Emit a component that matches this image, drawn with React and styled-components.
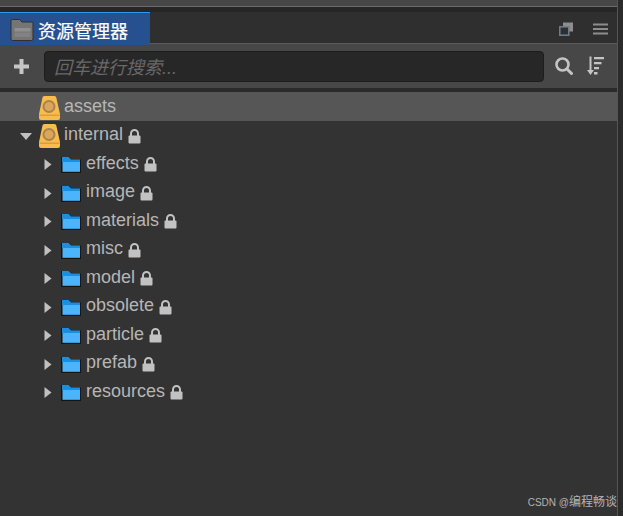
import React from 'react'
import styled, { createGlobalStyle } from 'styled-components'

const GlobalStyle = createGlobalStyle`
  html, body { margin: 0; padding: 0; background: #333333; }
  * { box-sizing: border-box; }
`

const Page = styled.div`
  position: relative;
  width: 623px;
  height: 516px;
  overflow: hidden;
  display: flex;
  background: #2b2b2b;
  font-family: "Liberation Sans", "Noto Sans CJK SC", sans-serif;
`

const Panel = styled.div`
  width: 618px;
  height: 100%;
  display: flex;
  flex-direction: column;
  border-right: 1px solid #555555;
`

const TopStrip = styled.div`
  height: 7px;
  flex: none;
  background: #474747;
  border-bottom: 1px solid #6a6a6a;
`

const TabBar = styled.div`
  height: 36px;
  flex: none;
  display: flex;
  align-items: flex-end;
  justify-content: space-between;
  padding-top: 5px;
  background: linear-gradient(#262626 0 5px, #2f2f2f 5px);
`

const Tab = styled.div`
  width: 150px;
  height: 33px;
  margin-bottom: -2px;
  position: relative;
  z-index: 1;
  display: flex;
  align-items: center;
  gap: 4px;
  padding: 1px 0 0 10px;
  background: #26508f;
  border-top: 1px solid #2c98ee;
  color: #ffffff;
  font-size: 18px;
  -webkit-text-stroke: 0.2px #ffffff;
`

const TabActions = styled.div`
  display: flex;
  align-items: center;
  gap: 20px;
  padding: 0 9px 7px 0;
  color: #8a8a8a;
`

const Toolbar = styled.div`
  height: 45px;
  flex: none;
  display: flex;
  align-items: center;
  padding: 0 12px 0 14px;
  background: #474747;
  border-top: 1px solid #5a5a5a;
`

const SearchBox = styled.div`
  width: 501px;
  height: 31px;
  margin: 0 11px 0 15px;
  display: flex;
  align-items: center;
  padding-left: 9px;
  background: #272727;
  border: 1px solid #1d1d1d;
  border-radius: 4px;
  color: #686868;
  font-size: 18px;
  font-style: italic;
`

const ToolIcon = styled.svg`
  display: block;
  flex: none;
  color: ${({ $color }) => $color || '#c4c4c4'};
  margin-right: ${({ $gap }) => $gap || 0}px;
`

const Divider = styled.div`
  height: 4px;
  flex: none;
  background: #2a2a2a;
`

const Tree = styled.div`
  flex: 1;
  background: #333333;
`

const Row = styled.div`
  height: 28.5px;
  display: flex;
  align-items: center;
  padding-top: 3px;
  padding-left: ${({ $depth }) => ($depth === 1 ? 44 : 20)}px;
  background: ${({ $selected }) => ($selected ? '#565656' : 'transparent')};
  color: #b6b6b6;
  font-size: 18px;
`

const ArrowSlot = styled.div`
  width: ${({ $depth }) => ($depth === 1 ? 16.5 : 19)}px;
  flex: none;
  display: flex;
  align-items: center;
`

const Name = styled.span`
  margin-left: ${({ $depth }) => ($depth === 1 ? 5.5 : 4)}px;
  margin-bottom: 3px;
`

const LockWrap = styled.span`
  margin-left: 5px;
  display: flex;
`

const Watermark = styled.div`
  position: absolute;
  right: 6px;
  bottom: 6px;
  display: flex;
  align-items: baseline;
  color: #b4b4b4;
  font-size: 12px;
  line-height: 14px;
  font-family: "Noto Sans CJK SC", "Liberation Sans", sans-serif;
`

const WatermarkLatin = styled.span`
  font-family: "Liberation Sans", sans-serif;
  font-size: 10px;
`

const TabFolder = () => (
  <svg width="24" height="22" viewBox="0 0 24 22">
    <path d="M1 2a1.500 1.500 0 0 1 1.500-1.500h7L12 3h9.500A1.500 1.500 0 0 1 23 4.500V20a1.500 1.500 0 0 1-1.500 1.500h-19A1.500 1.500 0 0 1 1 20z" fill="#757575" stroke="#303030" strokeWidth="1" />
    <rect x="4.500" y="9" width="16" height="3.500" fill="#8f8f8f" />
    <rect x="4.500" y="13.500" width="16" height="4.500" fill="#828282" />
  </svg>
)

const Plus = () => (
  <ToolIcon width="15" height="15" viewBox="0 0 15 15" $color="#c6c6c6">
    <path d="M5.500 0h4v5.500H15v4H9.500V15h-4V9.500H0v-4h5.500z" fill="currentColor" />
  </ToolIcon>
)

const Search = () => (
  <ToolIcon width="18" height="18" viewBox="0 0 18 18" $gap={13}>
    <circle cx="7.500" cy="7.500" r="6" fill="none" stroke="currentColor" strokeWidth="2.600" />
    <path d="M12 12 16.500 16.500" stroke="currentColor" strokeWidth="3" strokeLinecap="round" />
  </ToolIcon>
)

const Sort = () => (
  <ToolIcon width="19" height="20" viewBox="0 0 19 20">
    <path d="M3.500 0.500h2V14H8l-3.500 5L1 14h2.500z" fill="currentColor" />
    <path d="M8 1h10v2.200H8zM8 6h7.500v2.200H8zM8 11h5v2.200H8zM8 16h3.500v2.500H8z" fill="currentColor" />
  </ToolIcon>
)

const Popout = () => (
  <ToolIcon width="14" height="14" viewBox="0 0 14 14" $color="#8d8d8d">
    <rect x="4.500" y="1" width="9" height="8" fill="#8d8d8d" stroke="#8d8d8d" />
    <rect x="0.800" y="4.800" width="9" height="8.400" fill="#2f2f2f" stroke="#6f7f92" strokeWidth="1.500" />
  </ToolIcon>
)

const Menu = () => (
  <ToolIcon width="15" height="12" viewBox="0 0 15 12" $color="#8d8d8d">
    <path d="M0 0.500h15v2H0zM0 5h15v2H0zM0 9.500h15v2H0z" fill="currentColor" />
  </ToolIcon>
)

const ArrowRight = () => (
  <svg width="8" height="11" viewBox="0 0 8 11">
    <path d="M0.500 0 7.500 5.500 0.500 11z" fill="#c0c0c0" />
  </svg>
)

const ArrowDown = () => (
  <svg width="12" height="7" viewBox="0 0 12 7">
    <path d="M0 0h12L6 7z" fill="#c0c0c0" />
  </svg>
)

const DbIcon = () => (
  <svg width="21" height="24" viewBox="0 0 21 24">
    <path d="M3.500 1.500Q3.500 0 5.500 0h10q1.500 0 1.800 1.500L21 18v4q0 2-2 2H2q-2 0-2-2v-4z" fill="#f7bc4c" />
    <path d="M0.500 18.500h20V20H0.500z" fill="#d99f3d" />
    <circle cx="10" cy="10.500" r="5.500" fill="#dba55a" stroke="#a98253" strokeWidth="2" />
  </svg>
)

const FolderIcon = () => (
  <svg width="20" height="17" viewBox="0 0 20 17">
    <path d="M0 1h8l2.500 2.500H20V17H0z" fill="#141414" />
    <path d="M1 1h6.600l2.500 2.500H19V6H1z" fill="#1a8fe0" />
    <path d="M1.500 6H19v9.800H1.500z" fill="#4cb4fb" />
  </svg>
)

const Lock = () => (
  <svg width="13" height="15" viewBox="0 0 13 15">
    <path d="M3 7V4.500a3.500 3.500 0 0 1 7 0V7" fill="none" stroke="#c2c2c2" strokeWidth="2" />
    <rect x="0.500" y="6.500" width="12" height="8" rx="1" fill="#c2c2c2" />
  </svg>
)

const folders = ['effects', 'image', 'materials', 'misc', 'model', 'obsolete', 'particle', 'prefab', 'resources']

const App = () => {
  return (
    <Page>
      <GlobalStyle />
      <Panel>
        <TopStrip />
        <TabBar>
          <Tab>
            <TabFolder />
            资源管理器
          </Tab>
          <TabActions>
            <Popout />
            <Menu />
          </TabActions>
        </TabBar>
        <Toolbar>
          <Plus />
          <SearchBox>回车进行搜索...</SearchBox>
          <Search />
          <Sort />
        </Toolbar>
        <Divider />
        <Tree>
          <Row $selected>
            <ArrowSlot />
            <DbIcon />
            <Name>assets</Name>
          </Row>
          <Row>
            <ArrowSlot>
              <ArrowDown />
            </ArrowSlot>
            <DbIcon />
            <Name>internal</Name>
            <LockWrap>
              <Lock />
            </LockWrap>
          </Row>
          {folders.map((name) => (
            <Row $depth={1} key={name}>
              <ArrowSlot $depth={1}>
                <ArrowRight />
              </ArrowSlot>
              <FolderIcon />
              <Name $depth={1}>{name}</Name>
              <LockWrap>
                <Lock />
              </LockWrap>
            </Row>
          ))}
        </Tree>
      </Panel>
      <Watermark>
        <WatermarkLatin>CSDN @</WatermarkLatin>
        <span>编程畅谈</span>
      </Watermark>
    </Page>
  )
}

export default App
